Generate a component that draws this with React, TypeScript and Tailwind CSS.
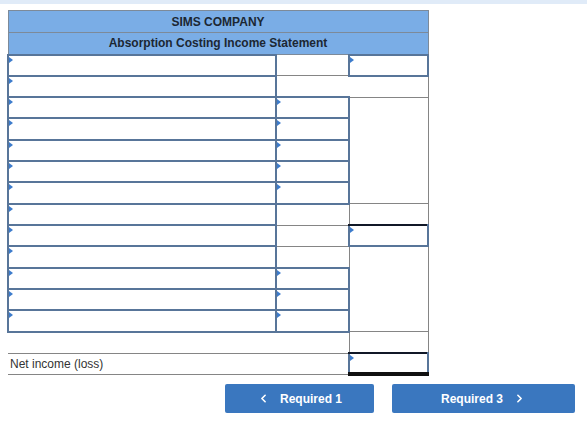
import { ChevronLeft, ChevronRight } from 'lucide-react';

function Flag() {
  return (
    <span className="absolute left-0 top-[1px] h-0 w-0 border-y-[3px] border-l-[4px] border-y-transparent border-l-[#3d7ccc]" />
  );
}

function InputCell({ className = '', colSpan }: { className?: string; colSpan?: number }) {
  return (
    <td colSpan={colSpan} className={`relative border-2 border-[#587599] bg-white p-0 ${className}`}>
      <Flag />
    </td>
  );
}

function BlankCell({ className = '', colSpan, rowSpan }: { className?: string; colSpan?: number; rowSpan?: number }) {
  return <td colSpan={colSpan} rowSpan={rowSpan} className={`border border-[#858585] bg-white p-0 ${className}`} />;
}

const rowH = 'h-[21.33px]';

export default function App() {
  return (
    <div className="min-h-[444px] w-[587px] bg-white font-['Liberation_Sans',Arial,sans-serif] text-[12px] text-[#333]">
      <div className="h-[4px] w-full bg-[#e0ebf8]" />
      <div className="pl-[7px] pt-[6px]">
        <table className="w-[420px] table-fixed border-collapse">
          <colgroup>
            <col className="w-[268px]" />
            <col className="w-[73px]" />
            <col className="w-[79px]" />
          </colgroup>
          <thead>
            <tr className="h-[22px]">
              <th colSpan={3} className="border border-[#7d8a99] bg-[#7aade6] p-0 text-center text-[12px] font-bold text-[#1c2733]">
                SIMS COMPANY
              </th>
            </tr>
            <tr className="h-[22px]">
              <th colSpan={3} className="border border-[#7d8a99] bg-[#7aade6] p-0 text-center text-[12px] font-bold text-[#1c2733]">
                Absorption Costing Income Statement
              </th>
            </tr>
          </thead>
          <tbody>
            <tr className={rowH}>
              <InputCell />
              <BlankCell />
              <InputCell />
            </tr>
            <tr className={rowH}>
              <InputCell />
              <BlankCell colSpan={2} />
            </tr>
            <tr className={rowH}>
              <InputCell />
              <InputCell />
              <BlankCell rowSpan={5} />
            </tr>
            {[0, 1, 2, 3].map((i) => (
              <tr key={i} className={rowH}>
                <InputCell />
                <InputCell />
              </tr>
            ))}
            <tr className={rowH}>
              <InputCell />
              <BlankCell className="border-t-2 border-t-[#111827]" />
              <BlankCell />
            </tr>
            <tr className={rowH}>
              <InputCell />
              <BlankCell />
              <InputCell className="border-t-[#111827]" />
            </tr>
            <tr className={rowH}>
              <InputCell />
              <BlankCell />
              <BlankCell rowSpan={4} />
            </tr>
            {[0, 1, 2].map((i) => (
              <tr key={i} className={rowH}>
                <InputCell />
                <InputCell />
              </tr>
            ))}
            <tr className={rowH}>
              <td colSpan={2} className="border-0 border-b border-b-[#858585] p-0" />
              <BlankCell />
            </tr>
            <tr className={rowH}>
              <td colSpan={2} className="border-y border-[#858585] px-[2px] py-0 text-left text-[12px] text-[#333]">
                Net income (loss)
              </td>
              <InputCell className="border-t-[#111827] border-b-4 border-b-[#111111]" />
            </tr>
          </tbody>
        </table>
      </div>
      <div className="mt-[8px] flex justify-end gap-[18px] pr-[12px]">
        <button className="flex h-[29px] w-[149px] items-center justify-center gap-[10px] rounded-[2px] bg-[#3a77bf] text-[12px] font-bold text-white">
          <ChevronLeft size={13} strokeWidth={3} />
          <span>Required 1</span>
        </button>
        <button className="flex h-[29px] w-[183px] items-center justify-center gap-[10px] rounded-[2px] bg-[#3a77bf] text-[12px] font-bold text-white">
          <span>Required 3</span>
          <ChevronRight size={13} strokeWidth={3} />
        </button>
      </div>
    </div>
  );
}
